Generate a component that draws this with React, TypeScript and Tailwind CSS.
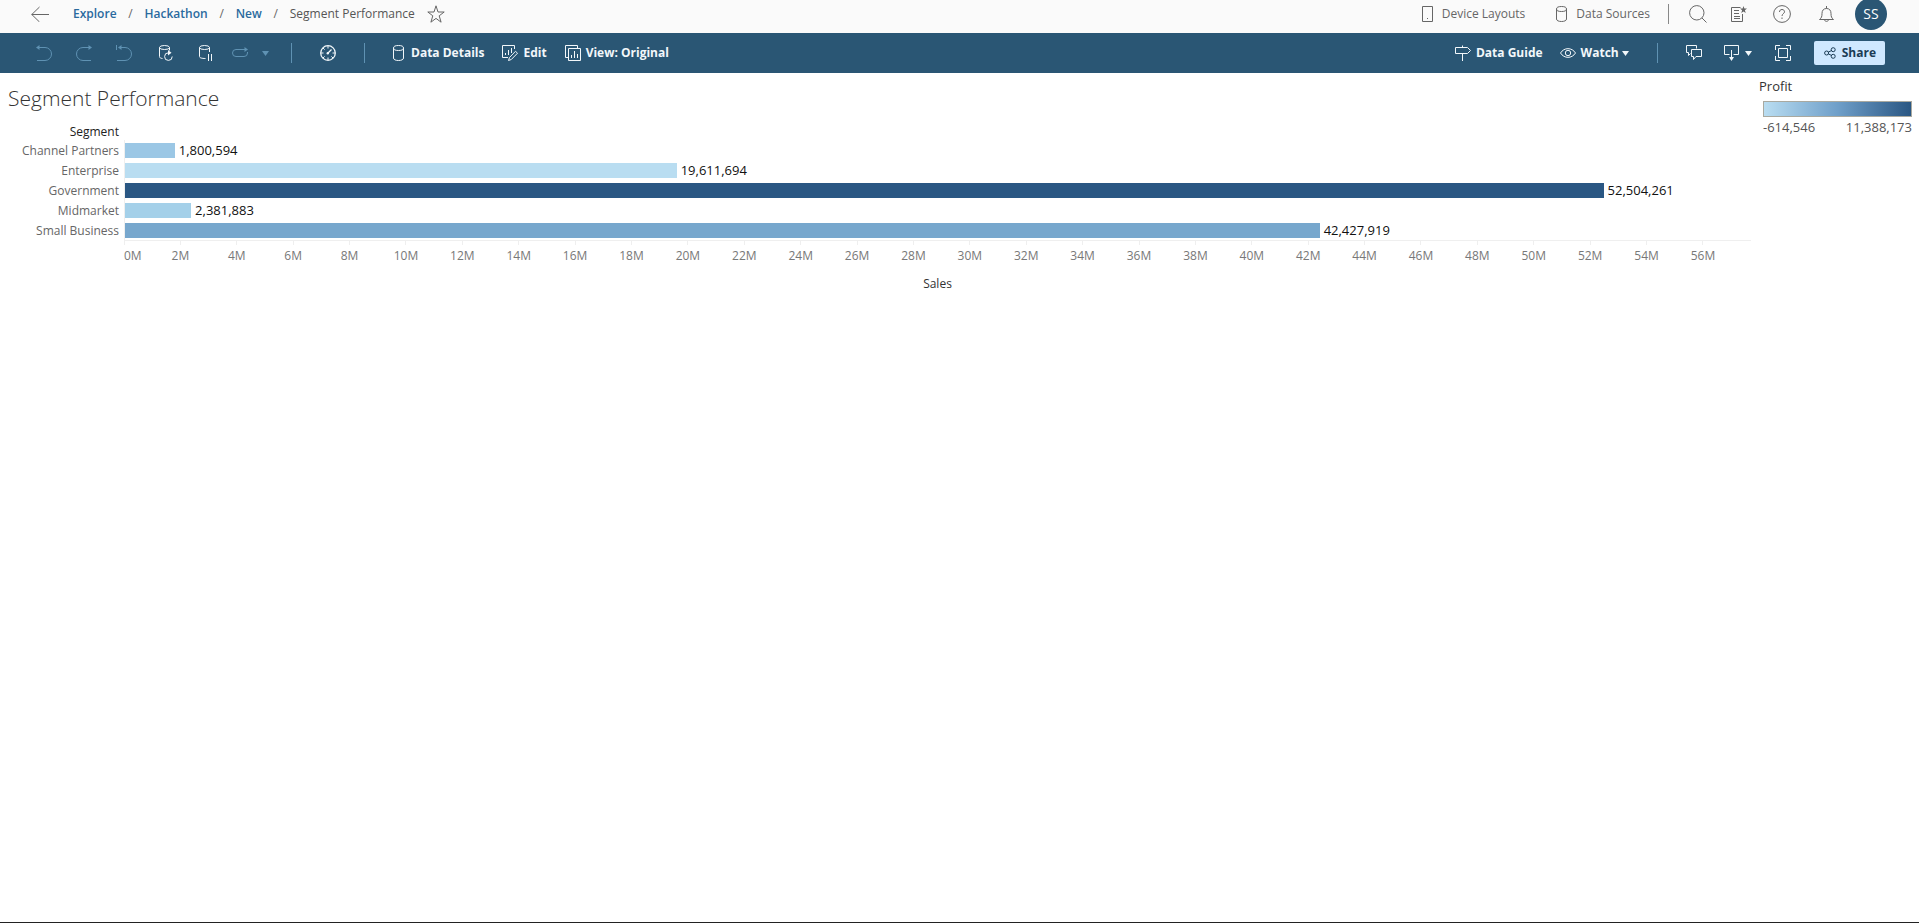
import React from 'react';

type IconProps = {
  w?: number;
  h?: number;
  className?: string;
  children: React.ReactNode;
};

function Icon({ w = 16, h = 16, className = '', children }: IconProps) {
  return (
    <svg
      width={w}
      height={h}
      viewBox={`0 0 ${w} ${h}`}
      fill="none"
      stroke="currentColor"
      strokeWidth="1"
      aria-hidden="true"
      className={`shrink-0 ${className}`}
    >
      {children}
    </svg>
  );
}

const BackIcon = () => (
  <Icon w={18} h={16}>
    <path d="M0.5 8.5H18M8.5 1L0.8 8.5L8.5 16" />
  </Icon>
);

const StarIcon = () => (
  <Icon w={18} h={18}>
    <path d="M9 0.8L11 7H17.2L12.2 10.8L14.1 17.2L9 13.4L3.9 17.2L5.8 10.8L0.8 7H7Z" />
  </Icon>
);

const PhoneIcon = () => (
  <Icon w={11}>
    <path d="M0.5 0.5H10.5V15.5H0.5Z" />
    <path d="M5 12.5H6" />
  </Icon>
);

const CylinderIcon = () => (
  <Icon w={11}>
    <ellipse cx="5.5" cy="3" rx="5" ry="2.5" />
    <path d="M0.5 3V13C0.5 14.6 2.6 15.5 5.5 15.5S10.5 14.6 10.5 13V3" />
  </Icon>
);

const SearchIcon = () => (
  <Icon w={18} h={18}>
    <circle cx="7.8" cy="7.8" r="7.2" />
    <path d="M13 13L17.5 17.5" />
  </Icon>
);

const FavoritesIcon = () => (
  <Icon w={16} h={16}>
    <path d="M9.5 1.5H0.5V15.5H11.5V8" />
    <path d="M3 4.5H8M3 7.5H8M3 10.5H9M3 12.5H9" />
    <path
      d="M12.5 0L13.4 2.6H16L13.9 4.2L14.7 7L12.5 5.4L10.3 7L11.1 4.2L9 2.6H11.6Z"
      fill="currentColor"
      stroke="none"
    />
  </Icon>
);

const HelpIcon = () => (
  <Icon w={18} h={18}>
    <circle cx="9" cy="9" r="8.4" />
    <path d="M6.5 7C6.5 5.4 7.5 4.5 9 4.5S11.5 5.4 11.5 6.8C11.5 8.6 9 8.8 9 11" />
    <path d="M9 12.5V14" />
  </Icon>
);

const BellIcon = () => (
  <Icon w={15} h={16}>
    <path d="M0.5 13.5C2.5 12 3 10.5 3 7.5C3 4.5 4.5 2.5 7.5 2.5S12 4.5 12 7.5C12 10.5 12.5 12 14.5 13.5Z" />
    <path d="M7.5 0V2.5M5.5 13.5C5.5 16 9.5 16 9.5 13.5" />
  </Icon>
);

const UndoIcon = () => (
  <Icon>
    <path d="M1 2.5H9A6.5 6.5 0 0 1 9 15.5H1" />
    <path d="M0 2.5L3.5 0V5Z" fill="currentColor" stroke="none" />
  </Icon>
);

const RedoIcon = () => (
  <Icon>
    <path d="M15 2.5H7A6.5 6.5 0 0 0 7 15.5H15" />
    <path d="M16 2.5L12.5 0V5Z" fill="currentColor" stroke="none" />
  </Icon>
);

const ResetIcon = () => (
  <Icon>
    <path d="M0.5 0V5M3 2.5H9A6.5 6.5 0 0 1 9 15.5H1" />
    <path d="M2 2.5L5.5 0V5Z" fill="currentColor" stroke="none" />
  </Icon>
);

const RefreshDataIcon = () => (
  <Icon w={14}>
    <ellipse cx="5.5" cy="2.5" rx="5" ry="2" />
    <path d="M0.5 2.5V11.5C0.5 12.7 1.5 13.3 3.5 13.5M10.5 2.5V5.5" />
    <path d="M9.5 7.8A3.8 3.8 0 1 0 13.2 11.5" />
    <path d="M9 5L12.5 7.8L9 10.6Z" fill="currentColor" stroke="none" />
  </Icon>
);

const PauseDataIcon = () => (
  <Icon w={14}>
    <ellipse cx="5.5" cy="2.5" rx="5" ry="2" />
    <path d="M0.5 2.5V11.5C0.5 12.8 2.5 13.5 6.5 13.5M10.5 2.5V7" />
    <path d="M9.5 9V16M12.5 9V16" />
  </Icon>
);

const ReplayIcon = () => (
  <Icon>
    <path d="M14 4.5H4A3.5 3.5 0 0 0 4 11.5H12A3.5 3.5 0 0 0 15.5 8V7" />
    <path d="M16 4.5L12.5 2V7Z" fill="currentColor" stroke="none" />
  </Icon>
);

const GaugeIcon = () => (
  <Icon>
    <circle cx="8" cy="8" r="7.3" strokeWidth="1.3" />
    <path d="M8 1V3.5M8 12.5V15M1 8H3.5M12.5 8H15M3 3L4.6 4.6M3 13L4.6 11.4M13 13L11.4 11.4" />
    <path d="M8 8L11.5 4.5" strokeWidth="1.3" />
    <circle cx="7.8" cy="8.2" r="1.2" fill="currentColor" stroke="none" />
  </Icon>
);

const EditIcon = () => (
  <Icon>
    <path d="M6 12.5H0.5V0.5H12.5V4" />
    <path d="M3.5 8V10M6.5 5V10M9.5 3V8" />
    <path d="M6.5 15.5L7.5 12.5L13.5 6.3L15.5 8.2L9.3 14.5Z" />
  </Icon>
);

const ViewIcon = () => (
  <Icon>
    <path d="M3.5 3.5H15.5V15.5H3.5Z" />
    <path d="M3 12.5H0.5V0.5H12.5V3" />
    <path d="M6.5 10V13M9.5 6V13M12.5 9V13" />
  </Icon>
);

const GuideIcon = () => (
  <Icon>
    <path d="M0.5 2.5H12.5L15.5 5.5L12.5 8.5H0.5Z" />
    <path d="M7.5 0.5V2.5M7.5 8.5V16" />
  </Icon>
);

const EyeIcon = () => (
  <Icon>
    <path d="M0.5 8C4 2.2 12 2.2 15.5 8C12 13.8 4 13.8 0.5 8Z" />
    <circle cx="8" cy="8" r="2.7" />
  </Icon>
);

const CommentsIcon = () => (
  <Icon>
    <path d="M4.5 8.5L2.5 10.5V7.5H0.5V0.5H10.5V3.5" />
    <path d="M5.5 4.5H15.5V11.5H10L7.5 14.5V11.5H5.5Z" />
  </Icon>
);

const DownloadIcon = () => (
  <Icon>
    <path d="M5.5 9.5H0.5V0.5H14.5V9.5H9.5" />
    <path d="M7.5 5V13" />
    <path d="M5 12H10L7.5 16Z" fill="currentColor" stroke="none" />
  </Icon>
);

const FullScreenIcon = () => (
  <Icon>
    <path d="M3.5 3.5H12.5V12.5H3.5Z" />
    <path d="M0.5 5V0.5H5M11 0.5H15.5V5M15.5 11V15.5H11M5 15.5H0.5V11" />
  </Icon>
);

const ShareIcon = () => (
  <Icon w={12} h={12}>
    <circle cx="2.6" cy="6" r="2" />
    <circle cx="9.2" cy="2.7" r="2" />
    <circle cx="9.2" cy="9.3" r="2" />
    <path d="M4.4 5.1L7.4 3.6M4.4 6.9L7.4 8.4" />
  </Icon>
);

const Caret = () => (
  <Icon w={7} h={5}>
    <path d="M0 0H7L3.5 5Z" fill="currentColor" stroke="none" />
  </Icon>
);

const SEGMENTS = [
  { name: 'Channel Partners', sales: 1800594, fill: '#9bc7e5' },
  { name: 'Enterprise', sales: 19611694, fill: '#b9ddf1' },
  { name: 'Government', sales: 52504261, fill: '#2a5783' },
  { name: 'Midmarket', sales: 2381883, fill: '#a4d0e9' },
  { name: 'Small Business', sales: 42427919, fill: '#77a7cd' },
];

// right end of the sales axis, in millions
const AXIS_MAX = 57.7;
const TICKS = Array.from({ length: 28 }, (_, i) => (i + 1) * 2);

const pct = (millions: number) => `${(millions / AXIS_MAX) * 100}%`;

const CRUMBS = ['Explore', 'Hackathon', 'New'];

function Header() {
  return (
    <header className="flex h-[33px] items-start bg-[#fafafa] text-[#666]">
      <div className="flex h-7 flex-1 items-center pl-[31px]">
        <button type="button" aria-label="Back">
          <BackIcon />
        </button>
        <nav aria-label="Breadcrumb" className="ml-6 flex items-center text-xs leading-5">
          {CRUMBS.map((crumb) => (
            <React.Fragment key={crumb}>
              <a href="#" className="font-semibold text-[#2a6a9e]">
                {crumb}
              </a>
              <span className="w-7 text-center">/</span>
            </React.Fragment>
          ))}
          <span className="text-[#555]">Segment Performance</span>
        </nav>
        <button type="button" aria-label="Add to favorites" className="ml-3">
          <StarIcon />
        </button>
      </div>
      <div className="flex h-7 items-center pr-8 text-xs">
        <button type="button" className="flex items-center gap-[9px]">
          <PhoneIcon />
          Device Layouts
        </button>
        <button type="button" className="ml-[31px] flex items-center gap-[9px]">
          <CylinderIcon />
          Data Sources
        </button>
        <span className="ml-[18px] h-5 w-px bg-[#888]" />
        <button type="button" aria-label="Search" className="ml-5">
          <SearchIcon />
        </button>
        <button type="button" aria-label="Favorites" className="ml-6">
          <FavoritesIcon />
        </button>
        <button type="button" aria-label="Help" className="ml-[26px]">
          <HelpIcon />
        </button>
        <button type="button" aria-label="Notifications" className="ml-7">
          <BellIcon />
        </button>
        <button
          type="button"
          aria-label="Account"
          className="ml-[21px] size-8 shrink-0 rounded-full bg-[#2a5674] text-sm text-white"
        >
          SS
        </button>
      </div>
    </header>
  );
}

const TOOL = 'flex h-10 w-10 items-center justify-center';

function Toolbar() {
  return (
    <div className="flex h-10 items-center justify-between bg-[#2a5674] pr-[34px] pl-6 text-xs font-bold text-[#f2f7fa]">
      <div className="flex items-center">
        <button type="button" aria-label="Undo" className={`${TOOL} text-[#5f92b3]`}>
          <UndoIcon />
        </button>
        <button type="button" aria-label="Redo" className={`${TOOL} text-[#5f92b3]`}>
          <RedoIcon />
        </button>
        <button type="button" aria-label="Reset" className={`${TOOL} text-[#5f92b3]`}>
          <ResetIcon />
        </button>
        <button type="button" aria-label="Refresh data" className={`${TOOL} pl-1`}>
          <RefreshDataIcon />
        </button>
        <button type="button" aria-label="Pause updates" className={`${TOOL} pl-1`}>
          <PauseDataIcon />
        </button>
        <button type="button" aria-label="Replay" className="flex items-center gap-[14px] pl-2 text-[#5f92b3]">
          <ReplayIcon />
          <Caret />
        </button>
        <span className="ml-[22px] h-5 w-px bg-[#5f92b3]" />
        <button type="button" aria-label="Performance" className={`${TOOL} mx-4`}>
          <GaugeIcon />
        </button>
        <span className="h-5 w-px bg-[#5f92b3]" />
        <button type="button" className="ml-7 flex items-center gap-[7px]">
          <CylinderIcon />
          Data Details
        </button>
        <button type="button" className="ml-[18px] flex items-center gap-[5px]">
          <EditIcon />
          Edit
        </button>
        <button type="button" className="ml-[18px] flex items-center gap-[5px]">
          <ViewIcon />
          View: Original
        </button>
      </div>
      <div className="flex items-center">
        <button type="button" className="flex items-center gap-[5px]">
          <GuideIcon />
          Data Guide
        </button>
        <button type="button" className="ml-[17px] flex items-center gap-[5px]">
          <EyeIcon />
          <span className="flex items-center gap-[3px]">
            Watch
            <Caret />
          </span>
        </button>
        <span className="ml-7 h-5 w-px bg-[#5f92b3]" />
        <button type="button" aria-label="Comments" className="ml-7">
          <CommentsIcon />
        </button>
        <button type="button" aria-label="Download" className="ml-[22px] flex items-center gap-[5px]">
          <DownloadIcon />
          <Caret />
        </button>
        <button type="button" aria-label="Full screen" className="ml-[23px]">
          <FullScreenIcon />
        </button>
        <button
          type="button"
          className="ml-[23px] flex h-6 items-center gap-[6px] rounded-[2px] bg-[#cfe8ff] pr-[9px] pl-[10px] text-[#1b3c55]"
        >
          <ShareIcon />
          Share
        </button>
      </div>
    </div>
  );
}

function SalesChart() {
  return (
    <section className="min-w-0 flex-1">
      <h1 className="pt-[11px] pl-2 text-[21px] leading-7 font-light text-[#333]">Segment Performance</h1>
      <div className="mt-3 w-[119px] text-right text-xs leading-4 font-medium text-[#222]">Segment</div>
      <div className="flex">
        <div className="w-[124px] pt-px pr-[5px] text-right text-xs text-[#666]">
          {SEGMENTS.map((s) => (
            <div key={s.name} className="h-5 leading-5">
              {s.name}
            </div>
          ))}
        </div>
        <div className="min-w-0 flex-1">
          <div className="border-l border-[#efefef]">
            {SEGMENTS.map((s) => (
              <div key={s.name} className="flex h-5 items-center pt-px text-[13px] text-[#111]">
                <div
                  className="h-[15px] shrink-0"
                  style={{ width: `calc(${pct(s.sales / 1e6)} - 1px)`, backgroundColor: s.fill }}
                />
                <span className="ml-1">{s.sales.toLocaleString('en-US')}</span>
              </div>
            ))}
          </div>
          <div className="flex border-t border-[#efefef] text-xs leading-4 text-[#787878]">
            <div className="shrink-0" style={{ width: pct(1) }}>
              <div className="mb-[3px] h-1 w-px bg-[#efefef]" />
              0M
            </div>
            {TICKS.map((t) => (
              <div key={t} className="flex shrink-0 flex-col items-center" style={{ width: pct(2) }}>
                <div className="mb-[3px] h-1 w-px bg-[#efefef]" />
                {t}M
              </div>
            ))}
          </div>
          <div className="mt-3 text-center text-xs leading-4 font-medium text-[#333]">Sales</div>
        </div>
      </div>
    </section>
  );
}

function ProfitLegend() {
  return (
    <aside className="w-[168px] pt-1 pr-[7px] pl-2 text-[13px] text-[#555]">
      <div className="leading-[18px] font-medium text-[#333]">Profit</div>
      <div className="mt-[6px] ml-1 h-4 border border-[#a9a9a0] bg-linear-to-r from-[#b9ddf1] via-[#6f9fc9] to-[#2a5783]" />
      <div className="ml-1 flex justify-between leading-5">
        <span>-614,546</span>
        <span>11,388,173</span>
      </div>
    </aside>
  );
}

export default function App() {
  return (
    <div className="flex min-h-screen flex-col border-b border-[#222] bg-white font-['Open_Sans',sans-serif]">
      <Header />
      <Toolbar />
      <main className="flex flex-1">
        <SalesChart />
        <ProfitLegend />
      </main>
    </div>
  );
}
